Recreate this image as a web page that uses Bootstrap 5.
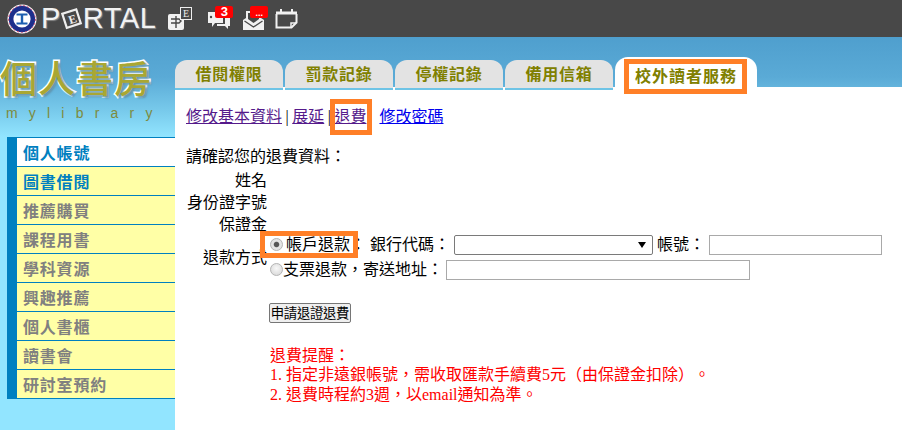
<!DOCTYPE html>
<html lang="zh-Hant">
<head>
<meta charset="utf-8">
<title>個人書房</title>
<link rel="stylesheet" href="https://cdn.jsdelivr.net/npm/bootstrap@5.3.0/dist/css/bootstrap.min.css">
<style>
html,body{height:430px;overflow:hidden}
body{font-family:"Liberation Serif","Noto Sans CJK TC",serif;font-size:16px;line-height:19px;color:#000;background:#92e5ff;text-spacing-trim:space-all}
.topbar{height:37px;background:#484848;padding-left:7px}
.brand-word{font-family:"Liberation Sans",sans-serif;font-size:29px;line-height:31px;letter-spacing:.5px;color:#f2f2f2;text-shadow:1px 1px 1px #8a8a8a}
.tool-ico{position:relative;display:block}
.tool-ico svg{display:block}
.tool-badge{position:absolute;top:-1px;height:12px;background:#f00;color:#fff;border-radius:2px;font:bold 13px/12px "Liberation Sans",sans-serif;text-align:center}
.stage{height:393px;background:linear-gradient(180deg,#4f9fce 0,#5aaad6 40px,#79cbec 75px,#92e5ff 100px)}
.sidecol{width:175px}
.logo-zone{height:100px;padding-top:15px;position:relative}
.logo-title{font-family:"Noto Sans CJK TC",sans-serif;font-weight:500;font-size:37px;line-height:50px;letter-spacing:1px;color:#a9a733;-webkit-text-stroke:3px #fff;paint-order:stroke fill;text-shadow:2px 2px 2px #5b93ad;white-space:nowrap}
.logo-sub{font-family:"Liberation Sans",sans-serif;font-size:14px;line-height:16px;letter-spacing:11.2px;color:#7d8b3d;padding-left:6px;margin-top:3px}
.sidemenu{margin-left:7px;border-left:10px solid #0080c0;border-top:1px solid #0080c0}
.sidemenu li{height:29px;background:#ffffa6;border-bottom:1px solid #0080c0;padding-left:6px;font:bold 16px/28px "Noto Sans CJK TC",sans-serif;letter-spacing:.8px;color:#808080}
.sidemenu li.now{background:#fff;color:#0080c0}
.sidemenu li.open{color:#0080c0}
.tabstrip{height:50px;padding-top:20px}
.tabitem{width:108px;height:30px;margin-top:3px;margin-right:2px;background:#e3e3e3;border-bottom:2px solid #6ec4e6;border-radius:12px 12px 0 0;font:bold 16px/26px "Noto Sans CJK TC",sans-serif;letter-spacing:.7px;color:#808000;text-align:center}
.tabitem.active{width:142px;height:33px;margin:0 0 -3px 0;background:#fff;border-bottom:0;border-radius:13px 13px 0 0;letter-spacing:1px;padding-top:6px;line-height:24px}
.panel{height:343px;background:#fff;padding:20px 0 0 11px}
.hl{position:relative;display:inline-block}
.hl::after{content:"";position:absolute;border:5px solid #ff7f27;pointer-events:none}
.hl-tab{line-height:24px}
.hl-tab::after{left:-11px;right:-10px;top:-4px;bottom:-7px}
.hl-link::after{left:-4px;right:-6px;top:-8px;bottom:-8px}
.hl-radio::after{left:-10px;right:-8px;top:-4px;bottom:-4px}
.panel a.seen{color:#551a8b}
.panel a.fresh{color:#00e}
.linkrow{line-height:20px;height:20px}
.sep{margin:0 3.5px}
.intro-line{margin-top:20px;line-height:19px;height:19px}
.info-table{border-collapse:collapse;margin-top:3px}
.info-table th{width:81px;font-weight:400;text-align:right;padding:0;vertical-align:middle;white-space:nowrap}
.info-table td{padding:0}
.info-table .rowh{height:22px}
.way-head{padding-bottom:2px!important}
.way-cell{padding-left:3px!important}
.radio-mock{appearance:none;-webkit-appearance:none;width:13px;height:13px;border-radius:50%;border:1px solid #b5b5b5;background:radial-gradient(circle at 50% 40%,#f8f8f8 0,#d4d4d4 100%);margin:0;flex:none}
.radio-mock:checked{background:radial-gradient(circle,#555 0,#555 28%,#e6e6e6 42%,#dcdcdc 100%)}
.field-line{height:25px;white-space:nowrap}
.field-first{margin-top:-3px}
.plain-select{appearance:none;-webkit-appearance:none;width:199px;height:20px;margin-left:4px;border:1px solid #7a7a7a;border-radius:2px;background:#fff url("data:image/svg+xml,%3Csvg xmlns='http://www.w3.org/2000/svg' width='8' height='6'%3E%3Cpath d='M0 0h8L4 6z'/%3E%3C/svg%3E") no-repeat right 6px center;padding:0}
.plain-input{height:20px;border:1px solid #a9a9a9;background:#fff;padding:0;border-radius:0;display:block}
.acct-input{width:173px;margin-left:4px}
.addr-input{width:304px;margin-left:3px}
.gap-a{margin-left:3px}
.gap-b{margin-left:4px}
.gap-c{margin-left:4px}
.btn-wrap{padding-left:83px;margin-top:21px}
.apply-btn{height:20px;width:82px;padding:0;font:13.33px/18px "Noto Sans CJK TC",sans-serif;background:#efefef;border:1px solid #767676;border-radius:2px;color:#000;white-space:nowrap;letter-spacing:-.02em}
.notice{color:#f00;margin:23px 0 0 0;padding-left:84px;line-height:19.3px;white-space:nowrap}
.fresh-gap{margin-left:9px}
.icons-wrap{margin-left:12px}
.ico-sign{margin-right:14px}
.ico-chat{margin-right:9px;width:26px}
.ico-mail{margin-right:7px;width:26px}
.ico-shift{margin-top:3px}
.badge-pos{left:8px;width:18px}
.badge-dots{font-size:9px;line-height:14px}
</style>
</head>
<body>
<header class="topbar d-flex align-items-center">
  <svg width="30" height="30" viewBox="0 0 30 30" aria-label="校徽">
    <circle cx="15" cy="15" r="14.5" fill="#fff"/>
    <circle cx="15" cy="15" r="13.2" fill="#1d2f8c"/>
    <circle cx="15" cy="15" r="13.4" fill="none" stroke="#d24b6a" stroke-width="1" stroke-dasharray="2 2"/>
    <circle cx="15" cy="15" r="8.6" fill="#fff"/>
    <path d="M9.5 9.5h11v2h-4.3v7h4.3v2h-11v-2h4.3v-7H9.5z" fill="#1d5fb0"/>
  </svg>
  <div class="d-flex align-items-center ms-1">
    <span class="brand-word">P</span>
    <svg width="22" height="26" viewBox="0 0 24 26">
      <rect x="3.5" y="4.5" width="16" height="16" fill="#484848" stroke="#eee" stroke-width="2.4" transform="rotate(-18 11.5 12.5)"/>
      <text x="8" y="18" font-family="Liberation Serif" font-size="13" font-weight="700" fill="#eee" transform="rotate(-18 11.5 12.5)">E</text>
    </svg>
    <span class="brand-word">RTAL</span>
  </div>
  <div class="d-flex align-items-center icons-wrap">
    <span class="tool-ico ico-sign"><svg width="25" height="24" viewBox="0 0 25 24">
      <rect x="0" y="7" width="16" height="16" rx="2" fill="#f1f1f1"/>
      <path d="M8 9v12M3 12h8l2 2-2 2H3" fill="none" stroke="#484848" stroke-width="1.4"/>
      <rect x="12.5" y=".5" width="11" height="12" fill="#484848" stroke="#eee"/>
      <text x="15" y="10" font-family="Liberation Serif" font-size="10" fill="#eee">E</text>
    </svg></span>
    <span class="tool-ico ico-chat"><svg width="24" height="20" viewBox="0 0 24 20" class="ico-shift">
      <path d="M1 2h15v11H8l-3 4v-4H1z" fill="#f1f1f1"/>
      <path d="M18 6h5v10h-2v3l-3-3h-8v-2h8z" fill="#f1f1f1"/>
      <circle cx="4" cy="7" r="1.2" fill="#484848"/>
    </svg><span class="tool-badge badge-pos">3</span></span>
    <span class="tool-ico ico-mail"><svg width="23" height="21" viewBox="0 0 23 21" class="ico-shift">
      <path d="M4 1h15v7l3 2v10H1V10l3-2z" fill="#f1f1f1"/>
      <path d="M6 3h11v6l-5.500 4L6 9z" fill="#484848"/>
      <path d="M2.500 11l9 6 9-6M8 6h7" fill="none" stroke="#484848" stroke-width="1.300"/>
    </svg><span class="tool-badge badge-pos badge-dots">...</span></span>
    <span class="tool-ico"><svg width="23" height="21" viewBox="0 0 23 21">
      <path d="M1 3.500h21v3H1zM5 1h2v3H5zM16 1h2v3h-2z" fill="#f1f1f1"/>
      <path d="M1.500 6v13.500h15l5-5V6" fill="none" stroke="#f1f1f1" stroke-width="2"/>
      <path d="M16 20v-5h5" fill="none" stroke="#f1f1f1" stroke-width="1.500"/>
    </svg></span>
  </div>
</header>
<main class="stage d-flex">
  <aside class="sidecol flex-shrink-0">
    <div class="logo-zone">
      <div class="logo-title">個人書房</div>
      <div class="logo-sub">mylibrary</div>
    </div>
    <ul class="sidemenu list-unstyled mb-0">
      <li class="now">個人帳號</li>
      <li class="open">圖書借閱</li>
      <li>推薦購買</li>
      <li>課程用書</li>
      <li>學科資源</li>
      <li>興趣推薦</li>
      <li>個人書櫃</li>
      <li>讀書會</li>
      <li>研討室預約</li>
    </ul>
  </aside>
  <section class="flex-grow-1">
    <nav class="tabstrip d-flex">
      <div class="tabitem">借閱權限</div>
      <div class="tabitem">罰款記錄</div>
      <div class="tabitem">停權記錄</div>
      <div class="tabitem">備用信箱</div>
      <div class="tabitem active"><span class="hl hl-tab">校外讀者服務</span></div>
    </nav>
    <div class="panel">
      <div class="linkrow"><a class="seen" href="#">修改基本資料</a><span class="sep">|</span><a class="seen" href="#">展延</a><span class="sep">|</span><span class="hl hl-link"><a class="seen" href="#">退費</a></span> <a class="fresh fresh-gap" href="#">修改密碼</a></div>
      <div class="intro-line">請確認您的退費資料：</div>
      <table class="info-table">
        <tr class="rowh"><th>姓名</th><td></td></tr>
        <tr class="rowh"><th>身份證字號</th><td></td></tr>
        <tr class="rowh"><th>保證金</th><td></td></tr>
        <tr>
          <th class="way-head">退款方式</th>
          <td class="way-cell">
            <div class="field-line field-first d-flex align-items-center">
              <span class="hl hl-radio d-inline-flex align-items-center"><input class="radio-mock" type="radio" name="way" checked aria-label="帳戶退款"><span class="gap-a">帳戶退款</span></span>
              <span>：</span><span class="gap-b">銀行代碼：</span>
              <select class="plain-select" aria-label="銀行代碼"><option></option></select>
              <span class="gap-c">帳號：</span>
              <input class="plain-input acct-input" aria-label="帳號">
            </div>
            <div class="field-line d-flex align-items-center">
              <input class="radio-mock" type="radio" name="way" aria-label="支票退款"><span>支票退款，寄送地址：</span>
              <input class="plain-input addr-input" aria-label="寄送地址">
            </div>
          </td>
        </tr>
      </table>
      <div class="btn-wrap"><button class="apply-btn" type="button">申請退證退費</button></div>
      <div class="notice">退費提醒：<br>1. 指定非遠銀帳號，需收取匯款手續費5元（由保證金扣除）。<br>2. 退費時程約3週，以email通知為準。</div>
    </div>
  </section>
</main>
</body>
</html>
